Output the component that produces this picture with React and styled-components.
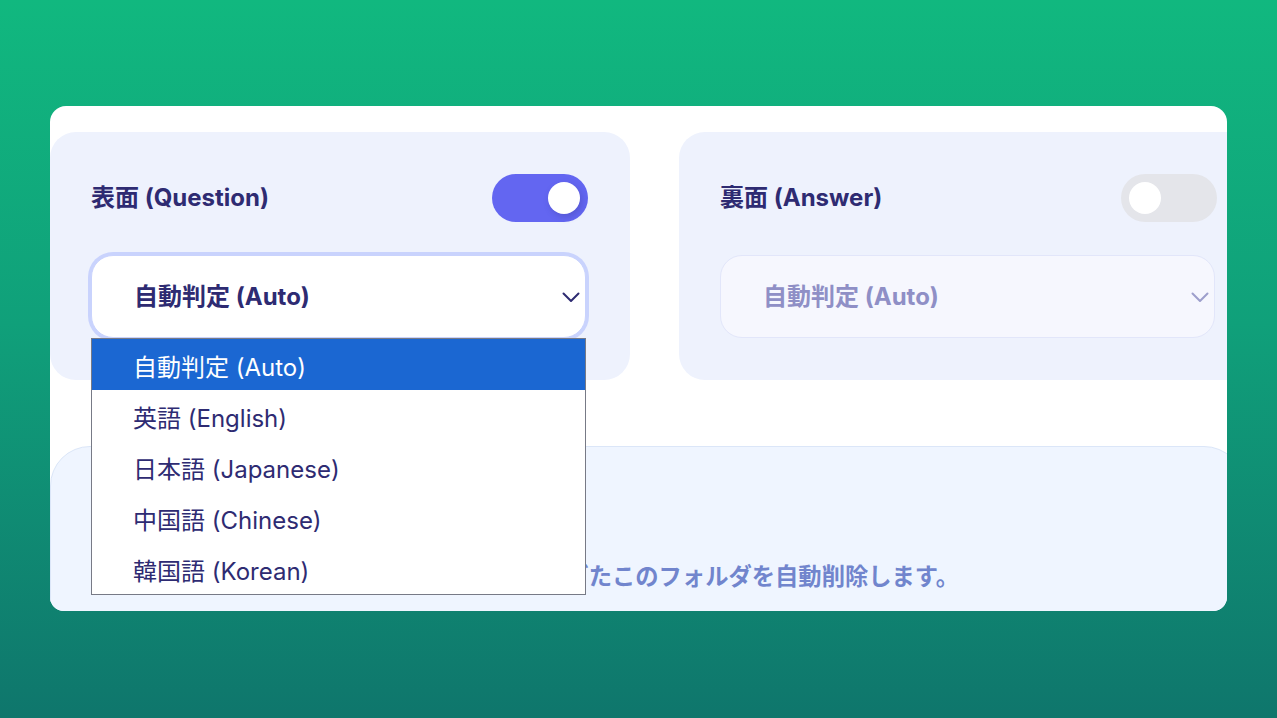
import React from "react";
import styled, { createGlobalStyle } from "styled-components";

const GlobalStyle = createGlobalStyle`
  body {
    margin: 0;
    font-family: "Inter", "Noto Sans CJK JP", sans-serif;
  }
`;

const Page = styled.div`
  height: 718px;
  box-sizing: border-box;
  padding: 106px 50px 0 50px;
  background: linear-gradient(180deg, #11b87f 0%, #10a07a 45%, #0f766c 100%);
  overflow: hidden;
`;

const Panel = styled.div`
  width: 1177px;
  height: 505px;
  box-sizing: border-box;
  padding-top: 26px;
  background: #ffffff;
  border-radius: 16px 16px 14px 14px;
  overflow: hidden;
`;

const CardRow = styled.div`
  display: flex;
  gap: 49px;
  width: 1210px;
`;

const Card = styled.div`
  flex: 0 0 580px;
  box-sizing: border-box;
  padding: 42px 42px 42px 41px;
  background: #eef2fd;
  border-radius: 26px;
  display: flex;
  flex-direction: column;
  gap: 33px;
`;

const TitleRow = styled.div`
  display: flex;
  align-items: center;
  justify-content: space-between;
  height: 48px;
`;

const Title = styled.div`
  font-size: 24px;
  line-height: 30px;
  margin-top: -1px;
  font-weight: 700;
  color: #2e2b72;
`;

const Toggle = styled.div`
  width: 96px;
  height: 48px;
  border-radius: 24px;
  background: ${(p) => (p.on ? "#6366f1" : "#e4e5ea")};
  display: flex;
  align-items: center;
  justify-content: ${(p) => (p.on ? "flex-end" : "flex-start")};
  padding: 0 8px;
  box-sizing: border-box;
`;

const Knob = styled.div`
  width: 32px;
  height: 32px;
  border-radius: 50%;
  background: #ffffff;
  box-shadow: ${(p) => (p.on ? "2px 3px 6px rgba(49, 46, 129, 0.25)" : "none")};
`;

const Field = styled.div`
  position: relative;
  width: 495px;
`;

const SelectBox = styled.div`
  height: 83px;
  box-sizing: border-box;
  display: flex;
  align-items: center;
  justify-content: space-between;
  padding: 0 2px 0 42px;
  border-radius: 22px;
  background: ${(p) => (p.disabled ? "#f6f7fe" : "#ffffff")};
  border: 1px solid ${(p) => (p.disabled ? "#e2e6fa" : "#c9d3fd")};
  box-shadow: ${(p) => (p.focused ? "0 0 0 3px #c9d3fd" : "none")};
  color: ${(p) => (p.disabled ? "#8f8fc6" : "#2e2b72")};
  font-size: 24px;
  line-height: 30px;
  font-weight: 700;

  span {
    margin-top: 1px;
  }
`;

const Chevron = ({ color }) => (
  <svg width="24" height="24" viewBox="0 0 24 24" fill="none" stroke={color} strokeWidth="2" strokeLinecap="round" strokeLinejoin="round">
    <path d="M4.5 8.5l7.5 7.5 7.5-7.5" />
  </svg>
);

const OptionList = styled.ul`
  position: absolute;
  top: 100%;
  left: 0;
  width: 100%;
  box-sizing: border-box;
  margin: 0;
  padding: 0;
  list-style: none;
  background: #ffffff;
  border: 1px solid #777a86;
  z-index: 10;
`;

const Option = styled.li`
  height: 51px;
  display: flex;
  align-items: center;
  padding: 7px 0 0 41px;
  box-sizing: border-box;
  font-size: 24px;
  line-height: 30px;
  font-weight: 400;
  background: ${(p) => (p.selected ? "#1b67d2" : "transparent")};
  color: ${(p) => (p.selected ? "#ffffff" : "#2e2b72")};
`;

const InfoCard = styled.div`
  margin-top: 66px;
  width: 1194px;
  height: 200px;
  box-sizing: border-box;
  padding: 38px 41px;
  background: #eff5ff;
  border: 1px solid #dbe6f8;
  border-radius: 40px 40px 0 0;
  display: flex;
  flex-direction: column;
  gap: 47px;
`;

const InfoTitle = styled.div`
  font-size: 24px;
  line-height: 30px;
  font-weight: 700;
  color: #2e2b72;
`;

const InfoText = styled.div`
  font-size: 23.3px;
  line-height: 30px;
  font-weight: 700;
  color: #7185cd;
  white-space: nowrap;
`;

const languages = [
  "自動判定 (Auto)",
  "英語 (English)",
  "日本語 (Japanese)",
  "中国語 (Chinese)",
  "韓国語 (Korean)",
];

const Side = ({ title, on, open }) => (
  <Card>
    <TitleRow>
      <Title>{title}</Title>
      <Toggle on={on}>
        <Knob on={on} />
      </Toggle>
    </TitleRow>
    <Field>
      <SelectBox disabled={!on} focused={open}>
        <span>{languages[0]}</span>
        <Chevron color={on ? "#2e2b72" : "#9d9fcc"} />
      </SelectBox>
      {open && (
        <OptionList>
          {languages.map((lang, i) => (
            <Option key={lang} selected={i === 0}>
              {lang}
            </Option>
          ))}
        </OptionList>
      )}
    </Field>
  </Card>
);

export default function App() {
  return (
    <>
      <GlobalStyle />
      <Page>
        <Panel>
          <CardRow>
            <Side title="表面 (Question)" on open />
            <Side title="裏面 (Answer)" on={false} />
          </CardRow>
          <InfoCard>
            <InfoTitle>自動削除</InfoTitle>
            <InfoText>設定した保存期間（最終更新から30日）を過ぎたこのフォルダを自動削除します。</InfoText>
          </InfoCard>
        </Panel>
      </Page>
    </>
  );
}
